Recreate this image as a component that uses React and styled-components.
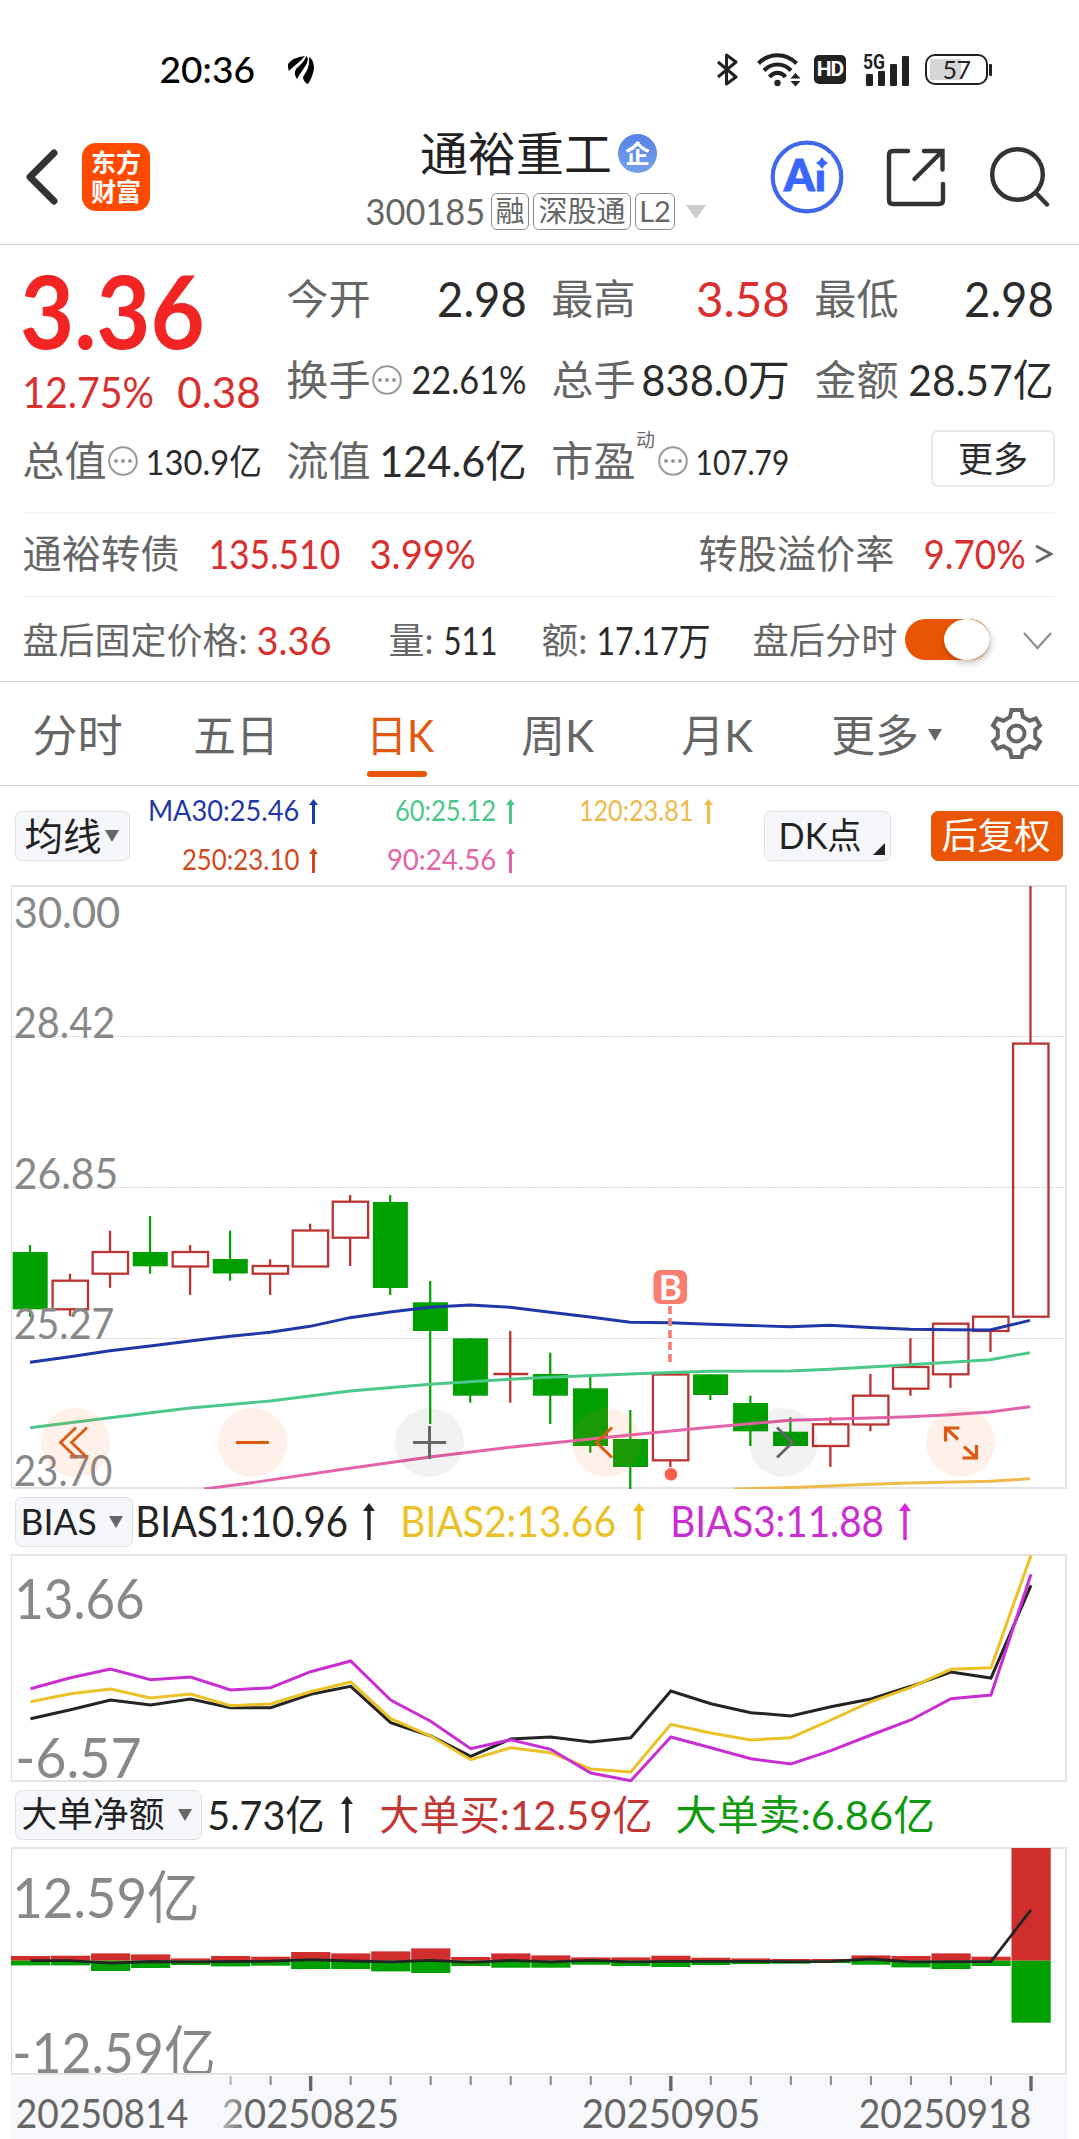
import React, { useLayoutEffect, useRef, useState } from 'react';
import styled, { createGlobalStyle } from 'styled-components';

const GlobalStyle = createGlobalStyle`
  * {
    box-sizing: border-box;
  }
  body {
    margin: 0;
    background: #ffffff;
    font-family: Lato, 'Noto Sans CJK SC', sans-serif;
    -webkit-font-smoothing: antialiased;
  }
`;

const RED = '#d8302e';
const UP = '#b93432';
const DOWN = '#00a000';
const ORANGE = '#e95504';
const GREY = '#666666';
const INK = '#2b2b2b';

/* ---------- text ---------- */

const FitBox = styled.span`
  display: inline-block;
  flex: none;
  width: ${(p) => p.$w}px;
  margin-left: ${(p) => p.$ml || 0}px;
  font-size: ${(p) => p.$size}px;
  font-weight: ${(p) => p.$weight || 400};
  line-height: ${(p) => p.$lh || 1.2};
  color: ${(p) => p.$color || INK};
  white-space: nowrap;
`;
const FitInner = styled.span`
  display: inline-block;
  transform-origin: 0 50%;
`;

// squeezes a value so it always fills its cell
function Fit({ w, size, ml, weight, lh, color, children }) {
  const ref = useRef(null);
  const [scale, setScale] = useState(1);
  const pad = size * 0.04;
  useLayoutEffect(() => {
    setScale((w + pad * 2) / ref.current.offsetWidth);
  }, [w, pad, children]);
  return (
    <FitBox $w={w} $size={size} $ml={ml} $weight={weight} $lh={lh} $color={color}>
      <FitInner
        ref={ref}
        style={{ transform: `translateX(${-pad}px) scaleX(${scale})` }}
      >
        {children}
      </FitInner>
    </FitBox>
  );
}

/* ---------- layout ---------- */

const Page = styled.div`
  width: 1079px;
  height: 2139px;
  overflow: hidden;
  background: #ffffff;
`;
const StatusBar = styled.div`
  display: flex;
  align-items: center;
  height: 109px;
  padding: 30px 87px 0 161px;
`;
const StatusIcons = styled.div`
  display: flex;
  align-items: center;
  margin-left: auto;
`;
const StatusSvg = styled.svg`
  display: block;
  flex: none;
  margin-left: ${(p) => p.$ml || 0}px;
`;
const HdBadge = styled.span`
  width: 32px;
  height: 29px;
  margin-left: 13px;
  border-radius: 5px;
  background: #222222;
  color: #ffffff;
  font: 700 21px/29px Roboto, sans-serif;
  letter-spacing: -1px;
  text-align: center;
`;
const Battery = styled.span`
  position: relative;
  width: 63px;
  height: 31px;
  margin: 0 4px 0 16px;
  border: 2px solid #222222;
  border-radius: 10px;
  background: linear-gradient(#d6d6d6, #d6d6d6) 3px 3px / 31px 21px no-repeat;
  color: #222222;
  font: 400 25px/26px Lato, sans-serif;
  letter-spacing: -0.5px;
  text-align: center;
  &::after {
    content: '';
    position: absolute;
    right: -6px;
    top: 8px;
    width: 3px;
    height: 12px;
    border-radius: 1px;
    background: #222222;
  }
`;

const Header = styled.div`
  display: flex;
  align-items: center;
  height: 136px;
  padding-left: 26px;
  border-bottom: 1px solid #d2d2d2;
`;
const HeaderSvg = styled.svg`
  display: block;
  flex: none;
  margin-left: ${(p) => p.$ml || 0}px;
`;
const Logo = styled.div`
  flex: none;
  width: 68px;
  height: 68px;
  margin-left: 24px;
  padding-top: 4px;
  border-radius: 14px;
  background: #ff4a00;
  color: #ffffff;
  font: 700 25px/29px 'Noto Sans CJK SC', sans-serif;
  text-align: center;
`;
const TitleBlock = styled.div`
  flex: none;
  width: 340px;
  height: 136px;
  margin-left: 217px;
  padding-top: 16px;
`;
const TitleLine = styled.div`
  display: flex;
  align-items: center;
  height: 58px;
  padding-left: 55px;
`;
const CorpBadge = styled.span`
  width: 39px;
  height: 39px;
  margin-left: 8px;
  border-radius: 50%;
  background: linear-gradient(#5783e6, #74a0ea);
  color: #ffffff;
  font: 700 25px/37px 'Noto Sans CJK SC', sans-serif;
  text-align: center;
`;
const CodeLine = styled.div`
  display: flex;
  align-items: center;
  height: 58px;
`;
const Tag = styled.span`
  flex: none;
  width: ${(p) => p.$w}px;
  height: 37px;
  margin-left: ${(p) => p.$ml}px;
  border: 1.5px solid #8c8c8c;
  border-radius: 6px;
  color: #666666;
  font-size: 29px;
  line-height: 33px;
  text-align: center;
  white-space: nowrap;
`;
const Triangle = styled.i`
  flex: none;
  width: 0;
  height: 0;
  margin-left: ${(p) => p.$ml || 0}px;
  border: ${(p) => p.$half}px solid transparent;
  border-bottom: 0;
  border-top: ${(p) => p.$h}px solid ${(p) => p.$color || GREY};
`;

const Quote = styled.div`
  display: grid;
  grid-template-columns: 236px 237px 235px 236px;
  grid-template-rows: repeat(3, 81px);
  column-gap: 28px;
  height: 267px;
  padding: 13px 26px 0 24px;
`;
const PriceCell = styled.div`
  grid-row: span 2;
`;
const PriceLine = styled.div`
  display: flex;
  align-items: center;
  height: ${(p) => p.$h}px;
`;
const Cell = styled.div`
  display: flex;
  align-items: center;
  justify-content: space-between;
`;
const Labels = styled.div`
  display: flex;
  align-items: center;
`;
const Sup = styled.span`
  width: 19px;
  margin: -44px 0 0 2px;
  color: ${GREY};
  font-size: 19px;
`;
const MoreButton = styled.div`
  width: 124px;
  height: 57px;
  margin: -4px -3px 0 auto;
  border: 2px solid #e9e9ea;
  border-radius: 7px;
  color: ${INK};
  font-size: 35px;
  line-height: 52px;
  text-align: center;
`;
const Row = styled.div`
  display: flex;
  align-items: center;
  height: ${(p) => p.$h}px;
  margin: 0 24px;
  padding-top: ${(p) => p.$pt || 0}px;
  padding-bottom: ${(p) => p.$pb || 0}px;
  border-top: ${(p) => p.$line};
`;
const Toggle = styled.span`
  display: flex;
  flex: none;
  justify-content: flex-end;
  width: 85px;
  height: 41px;
  margin: -3px 0 0 9px;
  border-radius: 21px;
  background: ${ORANGE};
`;
const Knob = styled.span`
  width: 46px;
  height: 41px;
  border-radius: 50%;
  background: #ffffff;
  box-shadow: 1px 3px 6px rgba(0, 0, 0, 0.25);
`;

const Tabs = styled.div`
  display: flex;
  height: 105px;
  padding-left: 34px;
  border-top: 1px solid #d2d2d2;
  border-bottom: 1px solid #d2d2d2;
`;
const Tab = styled.div`
  position: relative;
  display: flex;
  align-items: center;
  flex: none;
  height: 103px;
  margin-left: ${(p) => p.$ml || 0}px;
  padding-top: ${(p) => (p.$icon ? 0 : 3)}px;
  &::after {
    content: '';
    display: ${(p) => (p.$active ? 'block' : 'none')};
    position: absolute;
    left: -1px;
    bottom: 8px;
    width: 60px;
    height: 6px;
    border-radius: 3px;
    background: ${ORANGE};
  }
`;

const MaRow = styled.div`
  display: flex;
  align-items: center;
  height: 99px;
  padding-left: 15px;
`;
const Picker = styled.div`
  position: relative;
  display: flex;
  align-items: center;
  flex: none;
  width: ${(p) => p.$w}px;
  height: 50px;
  margin-left: ${(p) => p.$ml || 0}px;
  padding-left: ${(p) => p.$pl}px;
  border: 1.5px solid ${(p) => (p.$solid ? ORANGE : '#dfe1e4')};
  border-radius: 7px;
  background: ${(p) => (p.$solid ? ORANGE : '#f6f7fa')};
`;
const Corner = styled.i`
  position: absolute;
  right: 5px;
  bottom: 5px;
  border-left: 12px solid transparent;
  border-bottom: 12px solid #222222;
`;
const MaColumn = styled.div`
  flex: none;
  width: ${(p) => p.$w}px;
  height: 98px;
  margin-left: ${(p) => p.$ml}px;
`;
const MaItem = styled.div`
  display: flex;
  align-items: center;
  justify-content: flex-end;
  height: 49px;
`;
const ArrowSvg = styled.svg`
  display: block;
  flex: none;
  margin-left: ${(p) => p.$ml}px;
`;

const ChartWrap = styled.div`
  position: relative;
`;
const ChartSvg = styled.svg`
  display: block;
  font-family: Lato, 'Noto Sans CJK SC', sans-serif;
`;
const ChartButtons = styled.div`
  position: absolute;
  left: 41px;
  bottom: 12px;
  display: flex;
  gap: 108px;
`;
const RoundButton = styled.div`
  width: 69px;
  height: 69px;
  border-radius: 50%;
  background: ${(p) => (p.$muted ? 'rgba(0, 0, 0, 0.052)' : 'rgba(255, 110, 40, 0.1)')};
`;
const Legend = styled.div`
  display: flex;
  align-items: center;
  height: 65px;
  padding-left: 15px;
`;

/* ---------- small drawings ---------- */

function UpArrow({ color, ml, big }) {
  return big ? (
    <ArrowSvg $ml={ml} width="12" height="37" viewBox="0 0 12 37">
      <path d="M6 0L12 8H7.700V37H4.300V8H0Z" fill={color} />
    </ArrowSvg>
  ) : (
    <ArrowSvg $ml={ml} width="9" height="25" viewBox="0 0 9 25">
      <path d="M4.500 0L9 6H6V25H3V6H0Z" fill={color} />
    </ArrowSvg>
  );
}

function MoreDots() {
  return (
    <HeaderSvg $ml={3} width="30" height="30" viewBox="0 0 30 30">
      <circle cx="15" cy="15" r="13.8" fill="none" stroke="#999" strokeWidth="2" />
      <circle cx="8" cy="15" r="2" fill="#999" />
      <circle cx="15" cy="15" r="2" fill="#999" />
      <circle cx="22" cy="15" r="2" fill="#999" />
    </HeaderSvg>
  );
}

/* ---------- chart data ---------- */

const xAt = (i) => 30 + i * 40.02;

// [direction, body top, body bottom, high, low]
const CANDLES = [
  ['d', 1252, 1309.3, 1245, 1316.7],
  ['u', 1280.7, 1309.3, 1273.7, 1316],
  ['u', 1252, 1273.7, 1230.7, 1287.7],
  ['d', 1252, 1266.3, 1216, 1273.7],
  ['u', 1252, 1266.5, 1245, 1295],
  ['d', 1259, 1273.5, 1230.7, 1280.7],
  ['u', 1266, 1273.7, 1259.3, 1295],
  ['u', 1230.5, 1266.5, 1223.7, 1266.5],
  ['u', 1201.7, 1237.7, 1195, 1266],
  ['d', 1202, 1288, 1195, 1295],
  ['d', 1302.3, 1331, 1281, 1424],
  ['d', 1338.3, 1395.7, 1338.3, 1402.7],
  ['u', 1374, 1374, 1331, 1402.7],
  ['d', 1374, 1395.7, 1352.7, 1424],
  ['d', 1388.3, 1446, 1376.7, 1452.7],
  ['d', 1439, 1467, 1410, 1489],
  ['u', 1374.5, 1460.3, 1374.5, 1467],
  ['d', 1374.3, 1395, 1374.3, 1400],
  ['d', 1403, 1431.3, 1395.7, 1446],
  ['d', 1431.7, 1446, 1417.3, 1446],
  ['u', 1424.3, 1446, 1417.3, 1467],
  ['u', 1395.7, 1424.5, 1374, 1431.3],
  ['u', 1367, 1388.7, 1338.3, 1395.7],
  ['u', 1323.7, 1374.3, 1323.7, 1388],
  ['u', 1316.7, 1331, 1316.7, 1352],
  ['u', 1043.6, 1316.7, 886, 1316.7],
];

const MA_LINES = [
  {
    color: '#1f38a8',
    points:
      '30,1362.3 70,1356.7 110,1350.7 150,1346 190,1341 230,1336.3 270,1332.3 310,1326.3 350,1317.7 390,1312 430,1307.3 470,1305 510,1307.3 550,1312.3 590,1317 630,1322.3 670,1322.7 710,1324.3 750,1325.5 790,1326.7 830,1325.3 870,1327.5 910,1329.3 950,1329.7 990,1330 1030,1320.3',
  },
  {
    color: '#4cc78a',
    points:
      '30,1427.7 110,1417.7 190,1408 270,1401 350,1391 430,1384.3 510,1379.3 550,1377.3 630,1374 670,1372.5 710,1371.3 790,1371 830,1369.3 910,1364.7 990,1359.7 1030,1352.7',
  },
  {
    color: '#e463a8',
    points:
      '204,1489 252,1482.7 350,1468.3 430,1457 510,1447.3 630,1435 710,1427.3 790,1420.3 870,1418 910,1416.7 950,1414.7 990,1412 1030,1406.7',
  },
  {
    color: '#efb94c',
    points: '734,1489 800,1487.3 870,1484.3 910,1483 990,1481.3 1030,1478.7',
  },
];

const BIAS_LINES = [
  {
    color: '#242424',
    y: [1718.7, 1709.7, 1700, 1705, 1699, 1707.7, 1707.7, 1694.3, 1686.3, 1722.7, 1736, 1756.3, 1739, 1737, 1742, 1737.7, 1691, 1703.7, 1712.7, 1716, 1706.7, 1699, 1686.3, 1672, 1678, 1585.3],
  },
  {
    color: '#ebc128',
    y: [1701.7, 1693.7, 1689, 1698, 1694, 1705.7, 1704, 1691.7, 1682, 1718.7, 1736, 1759.7, 1747.7, 1752.7, 1769, 1772, 1724.3, 1733, 1740, 1737.7, 1720, 1701.7, 1687.3, 1669.3, 1667.7, 1555.3],
  },
  {
    color: '#c92fd0',
    y: [1688.7, 1677.7, 1669, 1679.7, 1677, 1690, 1687.7, 1671.7, 1661, 1700, 1721.3, 1748.7, 1739.7, 1749.3, 1773, 1780.7, 1737, 1747.7, 1758.7, 1764, 1750.7, 1735, 1720, 1698.7, 1695, 1574.3],
  },
];

const MID = 1960.7;
// [buy height, sell height, net offset]
const ORDERS = [
  [4.7, 4.7, 0], [5, 4.7, 0], [7.3, 10.3, 2.5], [6.3, 7.3, 0.8], [2.3, 4.3, 1.2], [4.7, 5.7, 0.8],
  [4, 5, 0.5], [8.7, 8.3, -1], [7.3, 8.3, 0.3], [9.3, 10.7, 1.2], [12.3, 12.3, -0.4], [3.7, 5.3, 1.6],
  [7.3, 7, -0.4], [5.3, 7, 1.2], [3.3, 4, -0.4], [3.3, 5.3, 1.2], [5, 6.3, 0.6], [3, 4.3, 0.6],
  [2.3, 3.3, 0.6], [1.7, 3, 0.9], [1.7, 2.3, 0.6], [5.3, 4, -1.7], [4.7, 6.7, 1.2], [7.3, 8.3, 0.9],
  [4, 5.3, 0.9], [112.7, 62, -50.8],
];

const PRICE_LABELS = [
  ['30.00', 928, 104],
  ['28.42', 1038, 99],
  ['26.85', 1189, 102],
  ['25.27', 1339, 98],
  ['23.70', 1485.5, 96],
];

function AxisText({ x, y, w, size, color = '#888888', children }) {
  return (
    <text
      x={x - size * 0.03}
      y={y}
      fontSize={size}
      fill={color}
      textLength={w + size * 0.06}
      lengthAdjust="spacingAndGlyphs"
    >
      {children}
    </text>
  );
}

function Frame({ top, bottom }) {
  return (
    <>
      <path d={`M11.5 ${top}V${bottom}`} stroke="#dedede" strokeWidth="1" />
      <path
        d={`M11 ${top}H1066V${bottom}H11`}
        fill="none"
        stroke="#e3e3e3"
        strokeWidth="2"
      />
    </>
  );
}

function CandleChart() {
  return (
    <ChartWrap>
      <ChartSvg width="1079" height="604" viewBox="0 885 1079 604">
        {[1036.5, 1187.5, 1338.5].map((y) => (
          <path key={y} d={`M12 ${y}H1066`} stroke="#d4d4d4" strokeDasharray="2 1" />
        ))}
        <Frame top={886} bottom={1488} />
        {CANDLES.map(([dir, top, bottom, high, low], i) => {
          const x = xAt(i);
          if (dir === 'd') {
            return (
              <g key={i} fill={DOWN}>
                <rect x={x - 1.1} y={high} width="2.2" height={low - high} />
                <rect x={x - 17.3} y={top} width="35" height={bottom - top} />
              </g>
            );
          }
          // open equals close: a flat bar instead of a box
          const flat = top === bottom;
          return (
            <g key={i} stroke={UP} strokeWidth="2.3" fill="none">
              <path d={`M${x} ${high}V${top}M${x} ${bottom}V${low}`} />
              {flat ? (
                <path d={`M${x - 17} ${top}H${x + 18}`} />
              ) : (
                <rect x={x - 17.4} y={top} width="35.4" height={bottom - top} />
              )}
            </g>
          );
        })}
        {MA_LINES.map((line) => (
          <polyline
            key={line.color}
            points={line.points}
            fill="none"
            stroke={line.color}
            strokeWidth="2.9"
          />
        ))}
        {PRICE_LABELS.map(([label, y, w]) => (
          <AxisText key={label} x={15} y={y} w={w} size={43}>
            {label}
          </AxisText>
        ))}
        <path d="M670 1306V1362" stroke="#ee7d72" strokeWidth="3.6" strokeDasharray="8 4" />
        <rect x="653.5" y="1270" width="33.5" height="34" rx="7" fill="#fb7d6e" />
        <text x="670.3" y="1299.5" fontSize="35" fontWeight="700" fill="#fff" textAnchor="middle">
          B
        </text>
        <circle cx="671" cy="1474.3" r="6.3" fill="#fb5f4e" />
      </ChartSvg>
      <ChartButtons>
        <RoundButton>
          <svg width="69" height="69" fill="none" stroke="#dd5a12" strokeWidth="2.8">
            <path d="M35 19.5L19.5 34.5L35 49.5M46 19.5L30.5 34.5L46 49.5" />
          </svg>
        </RoundButton>
        <RoundButton>
          <svg width="69" height="69" fill="none" stroke="#dd5a12" strokeWidth="3">
            <path d="M18 34.5H51" />
          </svg>
        </RoundButton>
        <RoundButton $muted>
          <svg width="69" height="69" fill="none" stroke="#666" strokeWidth="3">
            <path d="M18 34.5H51M34.5 18V51" />
          </svg>
        </RoundButton>
        <RoundButton>
          <svg width="69" height="69" fill="none" stroke="#dd5a12" strokeWidth="2.8">
            <path d="M40 19.5L24.5 34.5L40 49.5" />
          </svg>
        </RoundButton>
        <RoundButton $muted>
          <svg width="69" height="69" fill="none" stroke="#666" strokeWidth="2.8">
            <path d="M28 19.5L43.5 34.5L28 49.5" />
          </svg>
        </RoundButton>
        <RoundButton>
          <svg width="69" height="69" fill="none" stroke="#dd5a12" strokeWidth="3.2">
            <path d="M19.5 33.5V20H33.5M20 20L32 31.5M50.5 37V50H36.5M50.5 50L38 38.5" />
          </svg>
        </RoundButton>
      </ChartButtons>
    </ChartWrap>
  );
}

function BiasChart() {
  return (
    <ChartSvg width="1079" height="228" viewBox="0 1554 1079 228">
      <Frame top={1555} bottom={1781} />
      <AxisText x={16} y={1619} w={127} size={57}>
        13.66
      </AxisText>
      <AxisText x={17} y={1777.5} w={123} size={57}>
        -6.57
      </AxisText>
      {BIAS_LINES.map((line) => (
        <polyline
          key={line.color}
          points={line.y.map((y, i) => `${xAt(i) + 0.5},${y}`).join(' ')}
          fill="none"
          stroke={line.color}
          strokeWidth="3"
        />
      ))}
    </ChartSvg>
  );
}

function OrderChart() {
  return (
    <ChartSvg width="1079" height="228" viewBox="0 1847 1079 228">
      <AxisText x={14} y={1918} w={184} size={57}>
        12.59亿
      </AxisText>
      <AxisText x={14} y={2073} w={200} size={57}>
        -12.59亿
      </AxisText>
      <Frame top={1848} bottom={2074} />
      {ORDERS.map(([buy, sell], i) => (
        <g key={i}>
          <rect x={11 + i * 40.02} y={MID - buy} width="39.2" height={buy} fill="#cf2e2c" />
          <rect x={11 + i * 40.02} y={MID} width="39.2" height={sell} fill={DOWN} />
        </g>
      ))}
      <polyline
        points={ORDERS.map((o, i) => `${xAt(i) + 0.5},${MID + o[2]}`).join(' ')}
        fill="none"
        stroke="#242424"
        strokeWidth="2.8"
      />
    </ChartSvg>
  );
}

const DATES = [
  ['20250814', 17, 170],
  ['20250825', 223, 175],
  ['20250905', 583, 176],
  ['20250918', 860, 170],
];

function DateAxis() {
  return (
    <ChartSvg width="1079" height="64" viewBox="0 2075 1079 64">
      <defs>
        <linearGradient id="fade" x1="0" x2="1" y1="0" y2="0">
          <stop offset="0" stopColor="#f7f8fb" />
          <stop offset="0.3" stopColor="#f7f8fb" stopOpacity="0.85" />
          <stop offset="1" stopColor="#f7f8fb" stopOpacity="0" />
        </linearGradient>
      </defs>
      <rect x="11" y="2076" width="1056" height="63" fill="#f7f8fb" />
      {CANDLES.slice(4).map((_, n) => {
        const i = n + 4;
        const major = i === 7 || i === 16 || i === 25;
        return (
          <path
            key={i}
            d={`M${xAt(i) + 0.5} 2076V${major ? 2091 : 2085}`}
            stroke={major ? '#666' : '#888'}
            strokeWidth={major ? 3.4 : 2}
          />
        );
      })}
      {DATES.map(([date, x, w]) => (
        <AxisText key={date} x={x} y={2128} w={w} size={40} color={GREY}>
          {date}
        </AxisText>
      ))}
      <rect x="189" y="2076" width="60" height="63" fill="url(#fade)" />
    </ChartSvg>
  );
}

/* ---------- sections ---------- */

function Status() {
  return (
    <StatusBar>
      <Fit w={93} size={36} weight={500} color="#000">
        20:36
      </Fit>
      <StatusSvg $ml={34} width="27" height="30" viewBox="0 0 27 30">
        <path d="M0 9C5 3 10 2 17 1C12 7 8 9 1 16C0 14 0 12 0 9Z" />
        <path d="M18.500 1C20.500 3 20 6 18.500 9C16 14 12 18 9 24C7 21 6 18 8 14C12 10 16 7 18.500 1Z" />
        <path d="M21 2C26 5 27 13 25 18C24 22 22 26 20 29C17 28 15 25 15 22C19 16 22 11 21 2Z" />
      </StatusSvg>
      <StatusIcons>
        <StatusSvg width="21" height="33" viewBox="0 0 21 33" fill="none" stroke="#222" strokeWidth="3">
          <path d="M1 9L19 24L9.5 31V2L19 9L1 24" strokeLinejoin="round" />
        </StatusSvg>
        <StatusSvg $ml={19} width="44" height="34" viewBox="0 0 44 34" fill="none" stroke="#222" strokeWidth="4.200">
          <path d="M1.500 10.500C12 -0.500 29 -0.500 39.500 10.500" />
          <path d="M7 17.500C14.500 9.500 26.500 9.500 34 17.500" />
          <path d="M12.500 24C17 18.500 24 18.500 28.500 24" />
          <circle cx="20.500" cy="30" r="3.200" fill="#222" stroke="none" />
          <path d="M38.500 20L43.500 25.500H33.500ZM38.500 33.500L43.500 28H33.500Z" fill="#222" stroke="none" />
        </StatusSvg>
        <HdBadge>HD</HdBadge>
        <StatusSvg $ml={16} width="47" height="34" viewBox="0 0 47 34" fill="#222">
          <text x="1" y="16" fontSize="20" fontWeight="700" fontFamily="Roboto" textLength="22" lengthAdjust="spacingAndGlyphs">
            5G
          </text>
          <rect x="4" y="21" width="7" height="12" rx="1" />
          <rect x="16" y="18" width="7" height="15" rx="1" />
          <rect x="28" y="11" width="7" height="22" rx="1" />
          <rect x="40" y="3" width="7" height="30" rx="1" />
        </StatusSvg>
        <Battery>57</Battery>
      </StatusIcons>
    </StatusBar>
  );
}

function TopBar() {
  return (
    <Header>
      <HeaderSvg width="32" height="56" viewBox="0 0 32 56">
        <path d="M28 4L4 28L28 52" fill="none" stroke="#333" strokeWidth="7" strokeLinecap="round" strokeLinejoin="round" />
      </HeaderSvg>
      <Logo>
        东方
        <br />
        财富
      </Logo>
      <TitleBlock>
        <TitleLine>
          <Fit w={188} size={47} lh={1.15} color="#222">
            通裕重工
          </Fit>
          <CorpBadge>企</CorpBadge>
        </TitleLine>
        <CodeLine>
          <Fit w={117} size={37} color={GREY}>
            300185
          </Fit>
          <Tag $w={38} $ml={7}>融</Tag>
          <Tag $w={98} $ml={4}>深股通</Tag>
          <Tag $w={40} $ml={4}>L2</Tag>
          <Triangle $half={10.5} $h={14} $ml={11} $color="#cccccc" />
        </CodeLine>
      </TitleBlock>
      <HeaderSvg $ml={63} width="74" height="74" viewBox="0 0 74 74">
        <circle cx="37" cy="37" r="34.3" fill="none" stroke="#3f68ea" strokeWidth="4.200" />
        <text x="14" y="51" fontSize="43" fontWeight="900" fill="#3a66ff" stroke="#3a66ff" textLength="42" lengthAdjust="spacingAndGlyphs">
          Ai
        </text>
        <rect x="43" y="14" width="18" height="16.500" fill="#fff" />
        <path d="M52 17L54.500 20.500L58 23L54.500 25.500L52 29L49.500 25.500L46 23L49.500 20.500Z" fill="#3a66ff" />
      </HeaderSvg>
      <HeaderSvg $ml={42} width="60" height="60" viewBox="0 0 60 60" fill="none" stroke="#333" strokeWidth="4.400" strokeLinecap="round">
        <path d="M22 4H7Q3 4 3 8V53Q3 57 7 57H53Q57 57 57 53V37" strokeLinejoin="round" />
        <path d="M38 4H56.500V22.500M55.500 5L28.500 32" />
      </HeaderSvg>
      <HeaderSvg $ml={42} width="62" height="62" viewBox="0 0 62 62" fill="none" stroke="#333" strokeWidth="4.400" strokeLinecap="round">
        <circle cx="29.500" cy="28.500" r="25.300" />
        <path d="M48 47L59 58.500" />
      </HeaderSvg>
    </Header>
  );
}

function Metric({ label, value, w, size, color, more, sup }) {
  return (
    <Cell>
      <Labels>
        <Fit w={81} size={41} color={GREY}>
          {label}
        </Fit>
        {sup && <Sup>{sup}</Sup>}
        {more && <MoreDots />}
      </Labels>
      <Fit w={w} size={size} color={color}>
        {value}
      </Fit>
    </Cell>
  );
}

function QuoteBoard() {
  return (
    <Quote>
      <PriceCell>
        <PriceLine $h={105}>
          <Fit w={177} size={101} weight={700} lh={1} color="#f22424">
            3.36
          </Fit>
        </PriceLine>
        <PriceLine $h={58}>
          <Fit w={128} size={43} color={RED}>
            12.75%
          </Fit>
          <Fit w={80} size={43} ml={27} color={RED}>
            0.38
          </Fit>
        </PriceLine>
      </PriceCell>
      <Metric label="今开" value="2.98" w={86} size={48} />
      <Metric label="最高" value="3.58" w={90} size={48} color={RED} />
      <Metric label="最低" value="2.98" w={86} size={48} />
      <Metric label="换手" value="22.61%" w={112} size={39} more />
      <Metric label="总手" value="838.0万" w={145} size={43} />
      <Metric label="金额" value="28.57亿" w={142} size={43} />
      <Metric label="总值" value="130.9亿" w={113} size={35} more />
      <Metric label="流值" value="124.6亿" w={144} size={43} />
      <Metric label="市盈" value="107.79" w={91} size={35} more sup="动" />
      <Cell>
        <MoreButton>更多</MoreButton>
      </Cell>
    </Quote>
  );
}

function App() {
  return (
    <Page>
      <GlobalStyle />
      <Status />
      <TopBar />
      <QuoteBoard />
      <Row $h={84} $pb={3} $line="2px solid #f5f5f5">
        <Fit w={154} size={39} color={GREY}>通裕转债</Fit>
        <Fit w={129} size={40} ml={32} color={RED}>135.510</Fit>
        <Fit w={103} size={40} ml={32} color={RED}>3.99%</Fit>
        <Fit w={193} size={39} ml={226} color={GREY}>转股溢价率</Fit>
        <Fit w={99} size={40} ml={32} color={RED}>9.70%</Fit>
        <HeaderSvg $ml={11} width="18" height="20" viewBox="0 0 18 20">
          <path d="M1 2L16 10L1 18" fill="none" stroke={GREY} strokeWidth="2.6" />
        </HeaderSvg>
      </Row>
      <Row $h={85} $pt={3} $line="1px solid #ececec">
        <Fit w={222} size={36} color={GREY}>盘后固定价格:</Fit>
        <Fit w={72} size={38} ml={12} color={RED}>3.36</Fit>
        <Fit w={42} size={36} ml={60} color={GREY}>量:</Fit>
        <Fit w={51} size={38} ml={13}>511</Fit>
        <Fit w={43} size={36} ml={47} color={GREY}>额:</Fit>
        <Fit w={111} size={38} ml={12}>17.17万</Fit>
        <Fit w={142} size={36} ml={45} color={GREY}>盘后分时</Fit>
        <Toggle>
          <Knob />
        </Toggle>
        <HeaderSvg $ml={33} width="29" height="18" viewBox="0 0 29 18">
          <path d="M1 1L14.500 16L28 1" fill="none" stroke="#8f8f8f" strokeWidth="2.2" />
        </HeaderSvg>
      </Row>
      <Tabs>
        <Tab>
          <Fit w={87} size={44} color={GREY}>分时</Fit>
        </Tab>
        <Tab $ml={74}>
          <Fit w={82} size={44} color={GREY}>五日</Fit>
        </Tab>
        <Tab $ml={91} $active>
          <Fit w={64} size={44} color="#df5a10">日K</Fit>
        </Tab>
        <Tab $ml={91}>
          <Fit w={69} size={44} color={GREY}>周K</Fit>
        </Tab>
        <Tab $ml={91}>
          <Fit w={68} size={44} color={GREY}>月K</Fit>
        </Tab>
        <Tab $ml={82}>
          <Fit w={84} size={44} color={GREY}>更多</Fit>
          <Triangle $half={7.5} $h={12} $ml={11} />
        </Tab>
        <Tab $ml={48} $icon>
          <svg width="53" height="53" viewBox="-26.5 -26.5 53 53" fill="none" stroke={GREY} strokeWidth="4">
            <path d="M-5 -23.500H5L6.500 -16.500L13 -12.800L19.300 -15L23.500 -8L18.700 -3.600V3.600L23.500 8L19.300 15L13 12.800L6.500 16.500L5 23.500H-5L-6.500 16.500L-13 12.800L-19.300 15L-23.500 8L-18.700 3.600V-3.600L-23.500 -8L-19.300 -15L-13 -12.800L-6.500 -16.500Z" />
            <circle cx="0" cy="0" r="8" />
          </svg>
        </Tab>
      </Tabs>
      <MaRow>
        <Picker $w={115} $pl={10}>
          <Fit w={74} size={38} color="#222">均线</Fit>
          <Triangle $half={7.5} $h={12} $ml={5} />
        </Picker>
        <MaColumn $w={169} $ml={19}>
          <MaItem>
            <Fit w={149} size={28} color="#1f38a8">MA30:25.46</Fit>
            <UpArrow color="#1f38a8" ml={11} />
          </MaItem>
          <MaItem>
            <Fit w={115} size={28} color="#d2481f">250:23.10</Fit>
            <UpArrow color="#d2481f" ml={11} />
          </MaItem>
        </MaColumn>
        <MaColumn $w={128} $ml={69}>
          <MaItem>
            <Fit w={99} size={28} color="#4cc78a">60:25.12</Fit>
            <UpArrow color="#4cc78a" ml={11} />
          </MaItem>
          <MaItem>
            <Fit w={107} size={28} color="#e463a8">90:24.56</Fit>
            <UpArrow color="#e463a8" ml={11} />
          </MaItem>
        </MaColumn>
        <MaColumn $w={134} $ml={64}>
          <MaItem>
            <Fit w={112} size={28} color="#efb94c">120:23.81</Fit>
            <UpArrow color="#efb94c" ml={12} />
          </MaItem>
        </MaColumn>
        <Picker $w={127} $ml={51} $pl={15}>
          <Fit w={80} size={36} color="#222">DK点</Fit>
          <Corner />
        </Picker>
        <Picker $w={132} $ml={40} $pl={11} $solid>
          <Fit w={106} size={36} color="#fff">后复权</Fit>
        </Picker>
      </MaRow>
      <CandleChart />
      <Legend>
        <Picker $w={118} $pl={6}>
          <Fit w={73} size={36} color="#222">BIAS</Fit>
          <Triangle $half={7.5} $h={12} $ml={14} />
        </Picker>
        <Fit w={209} size={42} ml={4} color="#242424">BIAS1:10.96</Fit>
        <UpArrow big color="#242424" ml={17} />
        <Fit w={212} size={42} ml={27} color="#ebc128">BIAS2:13.66</Fit>
        <UpArrow big color="#f2bf10" ml={19} />
        <Fit w={210} size={42} ml={27} color="#c92fd0">BIAS3:11.88</Fit>
        <UpArrow big color="#d726dd" ml={17} />
      </Legend>
      <BiasChart />
      <Legend>
        <Picker $w={187} $pl={7}>
          <Fit w={140} size={35.5} color="#222">大单净额</Fit>
          <Triangle $half={7.5} $h={12} $ml={15} />
        </Picker>
        <Fit w={114} size={41} ml={7} color="#242424">5.73亿</Fit>
        <UpArrow big color="#242424" ml={18} />
        <Fit w={270} size={41} ml={28} color="#c23634">大单买:12.59亿</Fit>
        <Fit w={256} size={41} ml={26} color="#109a10">大单卖:6.86亿</Fit>
      </Legend>
      <OrderChart />
      <DateAxis />
    </Page>
  );
}

export default App;
